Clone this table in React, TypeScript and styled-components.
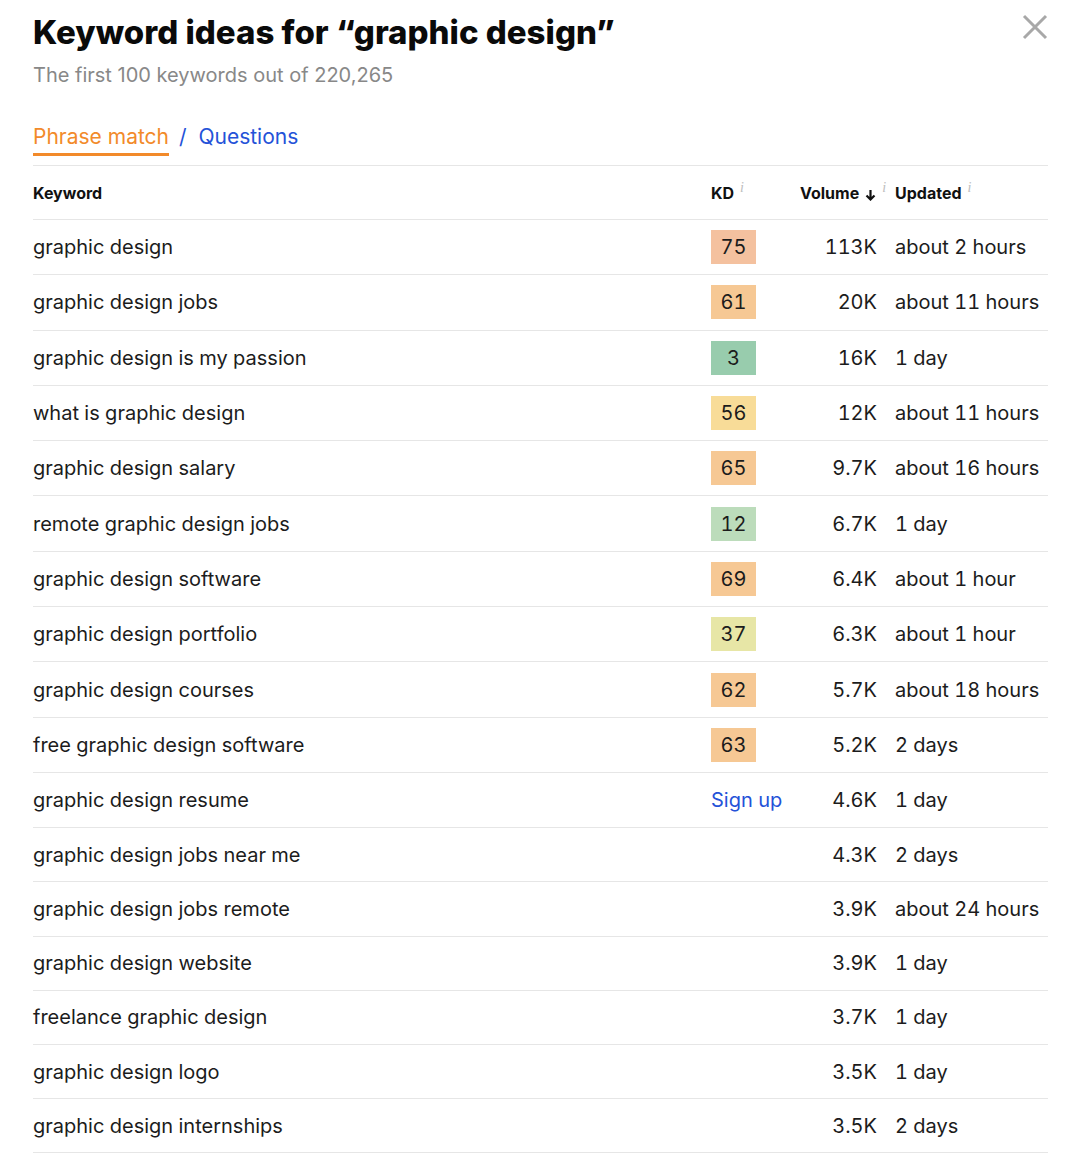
import React from 'react'
import styled, {createGlobalStyle} from 'styled-components'

const GlobalStyle = createGlobalStyle`
  body {
    margin: 0;
    background: #fff;
    font-family: Inter, "Noto Sans", sans-serif;
    color: #1c1c1c;
  }
`

const Modal = styled.div`
  position: relative;
  width: 1015px;
  padding: 14px 32px 0 33px;
`

const Title = styled.h1`
  margin: 0;
  font-size: 33px;
  line-height: 36px;
  font-weight: 800;
  color: #0a0a0a;
`

const Subtitle = styled.div`
  margin-top: 13px;
  font-size: 20px;
  line-height: 24px;
  color: #888;
`

const CloseButton = styled.button`
  position: absolute;
  top: 12px;
  right: 30px;
  width: 30px;
  height: 30px;
  padding: 0;
  border: none;
  background: none;
  display: flex;
  align-items: center;
  justify-content: center;
`

const Tabs = styled.div`
  margin-top: 38px;
  display: flex;
  align-items: flex-start;
  gap: 10px;
  font-size: 21px;
  line-height: 24px;
  border-bottom: 1px solid #e6e6e6;
`

const Tab = styled.div<{active?: boolean}>`
  color: ${props => props.active ? '#f28a2a' : '#2452d8'};
  padding-bottom: 4px;
  border-bottom: 3px solid ${props => props.active ? '#f28a2a' : 'transparent'};
  margin-bottom: 9px;
`

const Slash = styled.span`
  color: #2452d8;
`

const Grid = styled.div`
  display: grid;
  grid-template-columns: 678px 89px 77px 171px;
`

const Row = styled.div`
  display: contents;
  & > div {
    border-bottom: 1px solid #e6e6e6;
  }
`

const HeadCell = styled.div<{pad?: boolean}>`
  height: 53px;
  display: flex;
  align-items: center;
  padding-left: ${props => props.pad ? 18 : 0}px;
  font-size: 16px;
  font-weight: 700;
  color: #111;
  white-space: nowrap;
  & > svg {
    flex-shrink: 0;
  }
`

const Info = styled.span`
  font-family: "Liberation Serif", serif;
  font-style: italic;
  font-weight: 400;
  font-size: 14px;
  line-height: 14px;
  color: #bdbdbd;
  margin-left: 6px;
  align-self: flex-start;
  margin-top: 15px;
  flex-shrink: 0;
`

const Cell = styled.div<{right?: boolean, tall?: boolean, pad?: boolean}>`
  height: ${props => props.tall ? 54.3 : 53.2}px;
  display: flex;
  align-items: center;
  justify-content: ${props => props.right ? 'flex-end' : 'flex-start'};
  padding-left: ${props => props.pad ? 18 : 0}px;
  font-size: 20px;
  white-space: nowrap;
  font-variant-numeric: tabular-nums;
`

const Badge = styled.div<{bg: string}>`
  width: 45px;
  height: 34px;
  display: flex;
  align-items: center;
  justify-content: center;
  background: ${props => props.bg};
  font-size: 20px;
`

const SignUp = styled.a`
  color: #2452d8;
  text-decoration: none;
  font-size: 20px;
`

type Keyword = {
  keyword: string
  kd?: number
  bg?: string
  signUp?: boolean
  volume: string
  updated: string
}

const rows: Keyword[] = [
  {keyword: 'graphic design', kd: 75, bg: '#f4c19f', volume: '113K', updated: 'about 2 hours'},
  {keyword: 'graphic design jobs', kd: 61, bg: '#f6c894', volume: '20K', updated: 'about 11 hours'},
  {keyword: 'graphic design is my passion', kd: 3, bg: '#98ccad', volume: '16K', updated: '1 day'},
  {keyword: 'what is graphic design', kd: 56, bg: '#f8dc98', volume: '12K', updated: 'about 11 hours'},
  {keyword: 'graphic design salary', kd: 65, bg: '#f6c894', volume: '9.7K', updated: 'about 16 hours'},
  {keyword: 'remote graphic design jobs', kd: 12, bg: '#bcdcbb', volume: '6.7K', updated: '1 day'},
  {keyword: 'graphic design software', kd: 69, bg: '#f6c894', volume: '6.4K', updated: 'about 1 hour'},
  {keyword: 'graphic design portfolio', kd: 37, bg: '#e7e6a6', volume: '6.3K', updated: 'about 1 hour'},
  {keyword: 'graphic design courses', kd: 62, bg: '#f6c894', volume: '5.7K', updated: 'about 18 hours'},
  {keyword: 'free graphic design software', kd: 63, bg: '#f6c894', volume: '5.2K', updated: '2 days'},
  {keyword: 'graphic design resume', signUp: true, volume: '4.6K', updated: '1 day'},
  {keyword: 'graphic design jobs near me', volume: '4.3K', updated: '2 days'},
  {keyword: 'graphic design jobs remote', volume: '3.9K', updated: 'about 24 hours'},
  {keyword: 'graphic design website', volume: '3.9K', updated: '1 day'},
  {keyword: 'freelance graphic design', volume: '3.7K', updated: '1 day'},
  {keyword: 'graphic design logo', volume: '3.5K', updated: '1 day'},
  {keyword: 'graphic design internships', volume: '3.5K', updated: '2 days'},
]

const App = () => {
  return (
    <Modal>
      <GlobalStyle />
      <Title>Keyword ideas for “graphic design”</Title>
      <Subtitle>The first 100 keywords out of 220,265</Subtitle>
      <CloseButton aria-label="Close">
        <svg width="26" height="26" viewBox="0 0 26 26">
          <path d="M2 2 L24 24 M24 2 L2 24" stroke="#a8a8a8" strokeWidth="3" />
        </svg>
      </CloseButton>
      <Tabs>
        <Tab active>Phrase match</Tab>
        <Tab><Slash>/</Slash>&nbsp; Questions</Tab>
      </Tabs>
      <Grid>
        <Row>
          <HeadCell>Keyword</HeadCell>
          <HeadCell>KD<Info>i</Info></HeadCell>
          <HeadCell>
            Volume
            <svg width="11" height="12" viewBox="0 0 11 12" style={{marginLeft: 6, marginTop: 4}}>
              <path d="M5.5 1 V10.5 M1.5 6.5 L5.5 10.5 L9.5 6.5" stroke="#111" strokeWidth="2.2" fill="none" />
            </svg>
            <Info>i</Info>
          </HeadCell>
          <HeadCell pad>Updated<Info>i</Info></HeadCell>
        </Row>
        {rows.map(r => {
          const tall = r.kd !== undefined || r.signUp
          return (
            <Row key={r.keyword}>
              <Cell tall={tall}>{r.keyword}</Cell>
              <Cell tall={tall}>
                {r.kd !== undefined && <Badge bg={r.bg!}>{r.kd}</Badge>}
                {r.signUp && <SignUp href="#">Sign up</SignUp>}
              </Cell>
              <Cell tall={tall} right>{r.volume}</Cell>
              <Cell tall={tall} pad>{r.updated}</Cell>
            </Row>
          )
        })}
      </Grid>
    </Modal>
  )
}

export default App
